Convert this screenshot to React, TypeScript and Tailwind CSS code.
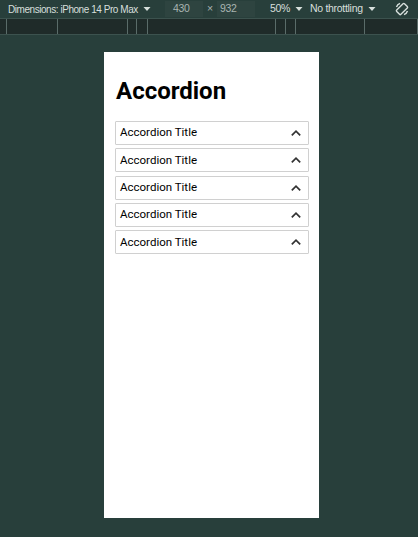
import React from "react";

function Caret() {
  return (
    <svg width="8" height="6" viewBox="0 0 8 6" className="block shrink-0">
      <path d="M0.5 1 L4 5 L7.5 1 Z" fill="#d7dfdc" />
    </svg>
  );
}

function Chevron() {
  return (
    <svg width="12" height="8" viewBox="0 0 12 8" className="block">
      <path d="M1.8 6.3 L6 2.1 L10.2 6.3" fill="none" stroke="#333" strokeWidth="1.7" />
    </svg>
  );
}

function RotateIcon() {
  return (
    <svg width="16" height="16" viewBox="0 0 16 16" className="block">
      <g fill="none" stroke="#d7dfdc" strokeWidth="1.4">
        <rect x="5" y="2.5" width="6" height="11" rx="1" transform="rotate(45 8 8)" />
        <path d="M2.5 6 A6 6 0 0 1 6 2.3" />
        <path d="M13.5 10 A6 6 0 0 1 10 13.7" />
      </g>
    </svg>
  );
}

export default function App() {
  const items = [0, 1, 2, 3, 4];
  const rulerLines = [6, 57, 127, 136, 147, 275, 285, 295, 364, 417];
  return (
    <div
      className="w-[418px] h-[537px] bg-[#283f3b] flex flex-col overflow-hidden"
      style={{ fontFamily: "'Liberation Sans', Arial, sans-serif" }}
    >
      <div className="h-[19px] flex items-center text-[10.5px] tracking-[-0.3px] whitespace-nowrap text-[#d7dfdc] border-b border-[#3c524e]">
        <div className="ml-[8px] w-[157px] shrink-0 flex items-center gap-[5px]">
          <span className="text-[10px] tracking-[-0.45px]">Dimensions: iPhone 14 Pro Max</span>
          <Caret />
        </div>
        <div className="w-[38px] h-[16px] shrink-0 bg-[#2e4440] flex items-center pl-[8px] text-[#a9b4b1]">430</div>
        <span className="w-[14px] shrink-0 pl-[4px] text-[#a9b4b1]">×</span>
        <div className="w-[38px] h-[16px] shrink-0 bg-[#2e4440] flex items-center pl-[3px] text-[#a9b4b1]">932</div>
        <div className="ml-[15px] w-[40px] shrink-0 flex items-center gap-[5px]">
          <span>50%</span>
          <Caret />
        </div>
        <div className="w-[84px] shrink-0 flex items-center gap-[5px]">
          <span>No throttling</span>
          <Caret />
        </div>
        <div className="shrink-0">
          <RotateIcon />
        </div>
      </div>
      <div className="h-[16px] bg-[#1f2b29] border-b border-[#3c524e] relative">
        {rulerLines.map((x) => (
          <div key={x} className="absolute top-0 bottom-0 w-px bg-[#5a6c69]" style={{ left: x }} />
        ))}
      </div>
      <div className="pt-[17px] pl-[104px]">
        <div
          className="w-[215px] h-[466px] bg-white px-[11px] pt-[25px]"
          style={{ fontFamily: "Roboto, 'Liberation Sans', sans-serif" }}
        >
          <h1 className="text-[24px] leading-[28px] font-bold text-black pl-[1px]">Accordion</h1>
          <div className="mt-[16px] flex flex-col gap-[3.3px]">
            {items.map((i) => (
              <div
                key={i}
                className="h-[24px] w-[194px] border border-[#d0d0d0] rounded-[1px] flex items-center justify-between pl-[4px] pr-[6px]"
              >
                <span className="text-[11.5px] font-normal text-black">Accordion Title</span>
                <Chevron />
              </div>
            ))}
          </div>
        </div>
      </div>
    </div>
  );
}
